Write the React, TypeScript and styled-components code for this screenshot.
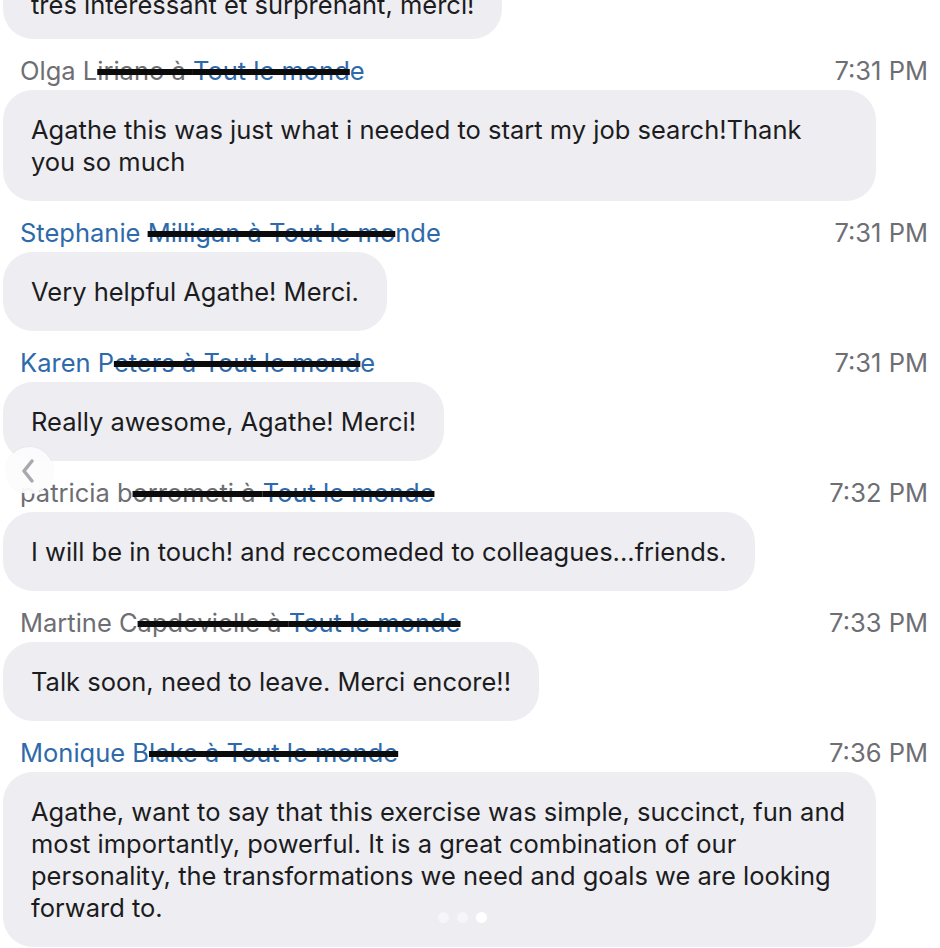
import React from "react";
import styled, { createGlobalStyle } from "styled-components";

type Part = { text: string; blue?: boolean; redacted?: boolean };

interface Msg {
    parts: Part[];
    time: string;
    lines: string[];
}

const messages: Msg[] = [
    {
        parts: [
            { text: "Olga L" },
            { text: "iriano à ", redacted: true },
            { text: "Tout le mond", blue: true, redacted: true },
            { text: "e", blue: true },
        ],
        time: "7:31 PM",
        lines: ["Agathe this was just what i needed to start my job search!Thank", "you so much"],
    },
    {
        parts: [
            { text: "Stephanie ", blue: true },
            { text: "Milligan à Tout le mo", blue: true, redacted: true },
            { text: "nde", blue: true },
        ],
        time: "7:31 PM",
        lines: ["Very helpful Agathe! Merci."],
    },
    {
        parts: [
            { text: "Karen P", blue: true },
            { text: "eters à Tout le mond", blue: true, redacted: true },
            { text: "e", blue: true },
        ],
        time: "7:31 PM",
        lines: ["Really awesome, Agathe! Merci!"],
    },
    {
        parts: [
            { text: "patricia b" },
            { text: "orrometi à ", redacted: true },
            { text: "Tout le monde", blue: true, redacted: true },
        ],
        time: "7:32 PM",
        lines: ["I will be in touch! and reccomeded to colleagues...friends."],
    },
    {
        parts: [
            { text: "Martine C" },
            { text: "apdevielle à ", redacted: true },
            { text: "Tout le monde", blue: true, redacted: true },
        ],
        time: "7:33 PM",
        lines: ["Talk soon, need to leave. Merci encore!!"],
    },
    {
        parts: [
            { text: "Monique B", blue: true },
            { text: "lake à Tout le monde", blue: true, redacted: true },
        ],
        time: "7:36 PM",
        lines: [
            "Agathe, want to say that this exercise was simple, succinct, fun and",
            "most importantly, powerful. It is a great combination of our",
            "personality, the transformations we need and goals we are looking",
            "forward to.",
        ],
    },
];

const App: React.FC = () => {
    return (
        <>
            <GlobalStyle />
            <Page>
                <Bubble $clipped>très intéressant et surprenant, merci!</Bubble>
                {messages.map((msg, i) => (
                    <Message key={i}>
                        <Header>
                            <Sender>
                                {msg.parts.map((p, j) => (
                                    <NamePart key={j} $blue={p.blue} $redacted={p.redacted}>
                                        {p.text}
                                    </NamePart>
                                ))}
                            </Sender>
                            <Time>{msg.time}</Time>
                        </Header>
                        <Bubble $wide={msg.lines.length > 1}>
                            {msg.lines.map((line, k) => (
                                <Line key={k}>{line}</Line>
                            ))}
                        </Bubble>
                    </Message>
                ))}
                <PrevButton>
                    <svg width="16" height="26" viewBox="0 0 16 26">
                        <polyline points="12,3 4,13 12,23" fill="none" stroke="#a8a8ad" strokeWidth="3.5" strokeLinecap="round" strokeLinejoin="round" />
                    </svg>
                </PrevButton>
                <Dots>
                    <Dot />
                    <Dot />
                    <Dot $active />
                </Dots>
            </Page>
        </>
    );
};

const GlobalStyle = createGlobalStyle`
  html, body {
    margin: 0;
    padding: 0;
    background: #ffffff;
  }
  body {
    font-family: Inter, "Noto Sans", "Liberation Sans", sans-serif;
  }
`;

const Page = styled.div`
  position: relative;
  width: 940px;
  height: 948px;
  overflow: hidden;
  background: #ffffff;
  display: flex;
  flex-direction: column;
  align-items: flex-start;
`;

const Message = styled.div`
  display: flex;
  flex-direction: column;
  align-items: flex-start;
  width: 100%;
`;

const Header = styled.div`
  box-sizing: border-box;
  width: 100%;
  display: flex;
  justify-content: space-between;
  align-items: center;
  padding: 17px 12px 0 20px;
  margin-bottom: 4px;
  font-size: 25.5px;
  line-height: 30px;
`;

const Sender = styled.div`
  white-space: nowrap;
`;

const NamePart = styled.span<{ $blue?: boolean; $redacted?: boolean }>`
  color: ${(p) => (p.$blue ? "#2e6aab" : "#6e6e73")};
  text-decoration: ${(p) => (p.$redacted ? "line-through" : "none")};
  text-decoration-color: #0b0b0b;
  text-decoration-thickness: 6px;
`;

const Time = styled.div`
  color: #6e6e73;
`;

const Bubble = styled.div<{ $clipped?: boolean; $wide?: boolean }>`
  box-sizing: border-box;
  margin-left: 3px;
  width: ${(p) => (p.$wide ? "873px" : "auto")};
  padding: 24px 28px ${(p) => (p.$clipped ? "18px" : "23px")};
  margin-top: ${(p) => (p.$clipped ? "-35px" : "0")};
  background: #eeeef2;
  border-radius: 30px;
  color: #1c1c1e;
  font-size: 25.5px;
  line-height: 32px;
`;

const Line = styled.div`
  white-space: nowrap;
`;

const PrevButton = styled.div`
  position: absolute;
  left: 6px;
  top: 447px;
  width: 47px;
  height: 47px;
  border-radius: 50%;
  background: rgba(252, 252, 253, 0.94);
  box-shadow: 0 0 2px rgba(0, 0, 0, 0.08);
  display: flex;
  align-items: center;
  justify-content: center;
  padding-right: 4px;
  box-sizing: border-box;
`;

const Dots = styled.div`
  position: absolute;
  left: 438px;
  top: 912px;
  display: flex;
  gap: 8px;
`;

const Dot = styled.div<{ $active?: boolean }>`
  width: 11px;
  height: 11px;
  border-radius: 50%;
  background: ${(p) => (p.$active ? "#ffffff" : "rgba(255, 255, 255, 0.45)")};
`;

export default App;
